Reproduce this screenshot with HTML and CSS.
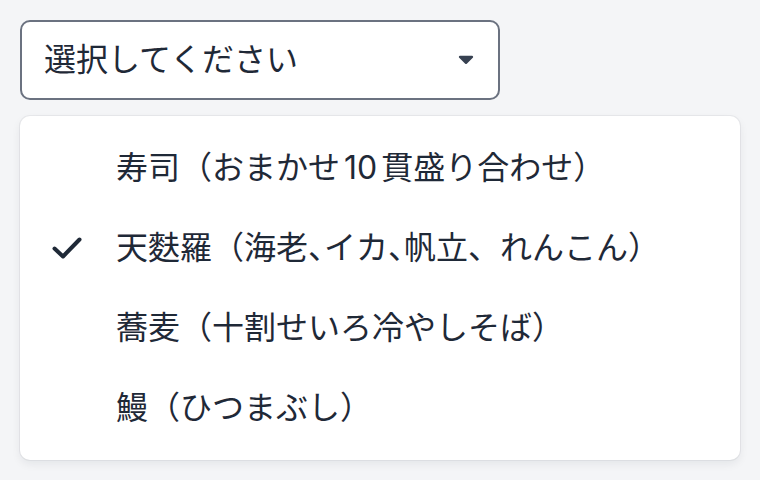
FILE: index.html
```html
<!DOCTYPE html>
<html lang="ja">
<head>
<meta charset="utf-8">
<link rel="stylesheet" href="styles.css">
</head>
<body>
<div class="picker">
  <div class="select">
    <span class="placeholder">選択してください</span>
    <svg class="caret" width="16" height="10" viewBox="0 0 16 10"><path d="M2 .8h12a1.1 1.1 0 0 1 .8 1.9l-6 6a1.1 1.1 0 0 1-1.6 0l-6-6A1.1 1.1 0 0 1 2 .8z"/></svg>
  </div>
  <ul class="listbox">
    <li class="option"><span class="check-slot"></span><span class="label">寿司（おまかせ10貫盛り合わせ）</span></li>
    <li class="option selected"><span class="check-slot"><svg class="check" width="30" height="22" viewBox="0 0 30 22"><polyline points="2.5,11.5 11,19.5 27.5,2.5"/></svg></span><span class="label">天麩羅（海老<span class="half">、</span>イカ<span class="half">、</span>帆立、れんこん）</span></li>
    <li class="option"><span class="check-slot"></span><span class="label">蕎麦（十割せいろ冷やしそば）</span></li>
    <li class="option"><span class="check-slot"></span><span class="label">鰻（ひつまぶし）</span></li>
  </ul>
</div>
</body>
</html>
```
FILE: styles.css
```css
html, body {
  margin: 0;
  background: #f4f5f7;
}
body {
  padding: 20px;
  font-family: Inter, "Noto Sans CJK JP", sans-serif;
  color: #1f2937;
}
.picker {
  display: flex;
  flex-direction: column;
  gap: 16px;
}
.select {
  box-sizing: border-box;
  width: 480px;
  height: 80px;
  border: 2px solid #6b7280;
  border-radius: 10px;
  background: #fff;
  display: flex;
  align-items: center;
  justify-content: space-between;
  padding: 0 24px 0 22px;
}
.placeholder {
  font-size: 32px;
  line-height: 1;
}
.caret {
  fill: #374151;
}
.listbox {
  list-style: none;
  margin: 0;
  padding: 12px 0;
  width: 720px;
  background: #fff;
  border-radius: 10px;
  box-shadow: 0 0 0 1px rgba(17, 24, 39, 0.05), 0 4px 10px rgba(17, 24, 39, 0.07);
}
.option {
  height: 80px;
  display: flex;
  align-items: center;
  padding-left: 32px;
}
.check-slot {
  width: 64px;
  display: flex;
  align-items: center;
}
.check {
  fill: none;
  stroke: #1f2937;
  stroke-width: 4;
  stroke-linecap: round;
  stroke-linejoin: round;
}
.label {
  font-size: 32px;
  line-height: 1;
  white-space: nowrap;
  text-autospace: normal;
}
.half {
  font-feature-settings: "halt";
}
```
